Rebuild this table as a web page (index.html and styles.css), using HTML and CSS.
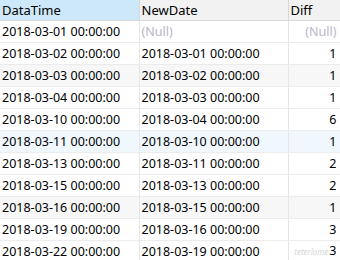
FILE: index.html
```html
<!DOCTYPE html>
<html lang="en">
<head>
    <meta charset="UTF-8">
    <title>Query Result</title>
    <link rel="stylesheet" href="styles.css">
</head>
<body>
    <table class="grid">
        <thead>
            <tr>
                <th class="col-a sorted">DataTime</th>
                <th class="col-b">NewDate</th>
                <th class="col-c">Diff</th>
            </tr>
        </thead>
        <tbody>
            <tr><td>2018-03-01 00:00:00</td><td class="null">(Null)</td><td class="num null">(Null)</td></tr>
            <tr><td>2018-03-02 00:00:00</td><td>2018-03-01 00:00:00</td><td class="num">1</td></tr>
            <tr class="shade"><td>2018-03-03 00:00:00</td><td>2018-03-02 00:00:00</td><td class="num">1</td></tr>
            <tr><td>2018-03-04 00:00:00</td><td>2018-03-03 00:00:00</td><td class="num">1</td></tr>
            <tr><td>2018-03-10 00:00:00</td><td>2018-03-04 00:00:00</td><td class="num">6</td></tr>
            <tr class="hover"><td>2018-03-11 00:00:00</td><td>2018-03-10 00:00:00</td><td class="num">1</td></tr>
            <tr><td>2018-03-13 00:00:00</td><td>2018-03-11 00:00:00</td><td class="num">2</td></tr>
            <tr><td>2018-03-15 00:00:00</td><td>2018-03-13 00:00:00</td><td class="num">2</td></tr>
            <tr class="shade"><td>2018-03-16 00:00:00</td><td>2018-03-15 00:00:00</td><td class="num">1</td></tr>
            <tr><td>2018-03-19 00:00:00</td><td>2018-03-16 00:00:00</td><td class="num">3</td></tr>
            <tr><td>2018-03-22 00:00:00</td><td>2018-03-19 00:00:00</td><td class="num"><span class="mark">teterlome</span>3</td></tr>
        </tbody>
    </table>
</body>
</html>
```

FILE: styles.css
```css
* { margin: 0; padding: 0; box-sizing: border-box; }
body { background: #fff; font-family: "Noto Sans", "DejaVu Sans", sans-serif; font-size: 12.5px; color: #000; overflow: hidden; }
.grid { border-collapse: collapse; table-layout: fixed; width: 340px; }
.grid th, .grid td { height: 22px; padding: 0 3px 0 2px; white-space: nowrap; overflow: hidden; border-right: 1px solid #e6e6e6; border-bottom: 1px solid #ececec; text-align: left; font-weight: normal; line-height: 20px; }
.grid th { height: 20px; font-size: 13px; background: #f2f2f2; border-bottom: 1px solid #dcdcdc; border-right: 1px solid #d8d8d8; }
.grid th.sorted { background: #cde9f9; }
.col-a { width: 139px; }
.col-b { width: 149px; }
.col-c { width: 52px; }
.grid td.num { text-align: right; }
.grid td.null { color: #b8b8c8; }
.grid tr.shade td { background: #f7f7f7; }
.grid tr.hover td { background: #f0f7fd; }
.mark { font-size: 8px; font-style: italic; color: #d6d6d6; margin-right: 1px; }
```
